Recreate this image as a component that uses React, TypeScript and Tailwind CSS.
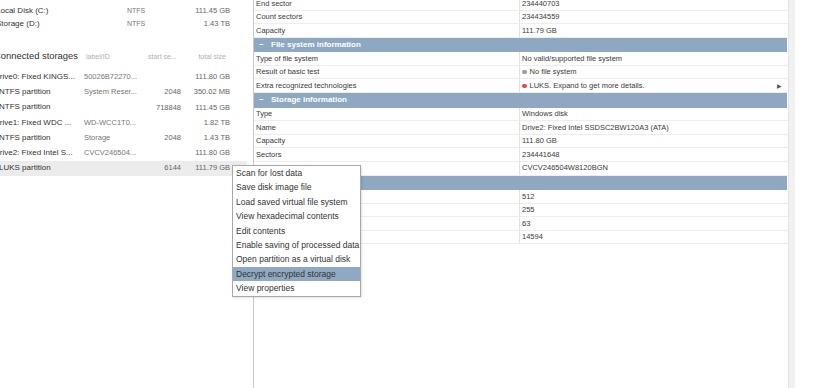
import React from "react";

const font = { fontFamily: '"Liberation Sans", Arial, sans-serif' };

type Row = { k: string; v: React.ReactNode };

function TRow({ k, v }: Row) {
  return (
    <div className="flex h-[13.6px] border-b border-[#ededed] text-[7.5px] text-[#3a3a3a] leading-none">
      <div className="w-[266px] flex items-center pl-[2px] border-r border-[#e2e2e2] shrink-0">{k}</div>
      <div className="flex-1 flex items-center pl-[2px] pr-[6px]">{v}</div>
    </div>
  );
}

function THead({ t, label = true }: { t: string; label?: boolean }) {
  return (
    <div className="flex items-center h-[14.5px] bg-[#8ea8c1] text-white font-bold text-[8px] leading-none mr-[1px]">
      <span className="pl-[5px] w-[17px]">−</span>
      {label ? <span>{t}</span> : null}
    </div>
  );
}

function Dot({ c }: { c: string }) {
  return <span className={`inline-block w-[4.5px] h-[4.5px] rounded-full mr-[3px] ${c}`} />;
}

const grid = "grid grid-cols-[90px_62px_35px_49px] items-center whitespace-nowrap leading-none";

function LRow({
  name,
  part,
  label,
  start,
  size,
  hl,
}: {
  name: string;
  part?: boolean;
  label?: string;
  start?: string;
  size: string;
  hl?: boolean;
}) {
  return (
    <div className={`h-[15.2px] flex items-center ${hl ? "bg-[#ececec]" : ""}`}>
      <div className={`${grid} -ml-[6px]`}>
        <span className={`text-[8px] text-[#333] overflow-visible ${part ? "pl-[5px]" : ""}`}>{name}</span>
        <span className="text-[7.5px] text-[#777]">{label}</span>
        <span className="text-[7.5px] text-[#666] text-right">{start}</span>
        <span className="text-[7.5px] text-[#666] text-right">{size}</span>
      </div>
    </div>
  );
}

function VolRow({ name, fs, size }: { name: string; fs: string; size: string }) {
  return (
    <div className="h-[13px] -ml-[4px] grid grid-cols-[131px_40px_63px] items-center whitespace-nowrap leading-none">
      <span className="text-[8px] text-[#333]">{name}</span>
      <span className="text-[7px] text-[#777]">{fs}</span>
      <span className="text-[7.5px] text-[#666] text-right">{size}</span>
    </div>
  );
}

const menuItems = [
  "Scan for lost data",
  "Save disk image file",
  "Load saved virtual file system",
  "View hexadecimal contents",
  "Edit contents",
  "Enable saving of processed data",
  "Open partition as a virtual disk",
  "Decrypt encrypted storage",
  "View properties",
];

export default function App() {
  return (
    <div className="relative w-[818px] h-[388px] overflow-hidden bg-white flex" style={font}>
      {/* Left panel */}
      <div className="w-[253px] shrink-0 flex flex-col overflow-hidden">
        <div className="pt-[4px] flex flex-col">
          <VolRow name="Local Disk (C:)" fs="NTFS" size="111.45 GB" />
          <VolRow name="Storage (D:)" fs="NTFS" size="1.43 TB" />
        </div>
        <div className="mt-[17px] h-[18px] flex items-center">
          <div className={`${grid} -ml-[6px]`}>
            <span className="text-[9.4px] text-[#2f2f2f]">Connected storages</span>
            <span className="text-[7px] text-[#b0b0b0] pl-[2px]">label/ID</span>
            <span className="text-[7px] text-[#b0b0b0] pl-[2px]">start se...</span>
            <span className="text-[7px] text-[#b0b0b0] text-right pr-[4px]">total size</span>
          </div>
        </div>
        <div className="mt-[4.4px] pr-[6px] flex flex-col">
          <LRow name="Drive0: Fixed KINGS..." label="50026B72270..." size="111.80 GB" />
          <LRow name="NTFS partition" part label="System Reser..." start="2048" size="350.02 MB" />
          <LRow name="NTFS partition" part start="718848" size="111.45 GB" />
          <LRow name="Drive1: Fixed WDC ..." label="WD-WCC1T0..." size="1.82 TB" />
          <LRow name="NTFS partition" part label="Storage" start="2048" size="1.43 TB" />
          <LRow name="Drive2: Fixed Intel S..." label="CVCV246504..." size="111.80 GB" />
          <LRow name="LUKS partition" part start="6144" size="111.79 GB" hl />
        </div>
      </div>

      {/* Right panel */}
      <div className="w-[542px] shrink-0 border-l border-[#c9c9c9] flex">
        <div className="flex-1 -mt-[3px]">
          <TRow k="End sector" v="234440703" />
          <TRow k="Count sectors" v="234434559" />
          <TRow k="Capacity" v="111.79 GB" />
          <THead t="File system information" />
          <TRow k="Type of file system" v="No valid/supported file system" />
          <TRow
            k="Result of basic test"
            v={
              <span className="flex items-center">
                <Dot c="bg-[#9a9a9a]" />
                No file system
              </span>
            }
          />
          <TRow
            k="Extra recognized technologies"
            v={
              <span className="flex items-center w-full">
                <Dot c="bg-[#e0484c]" />
                <span className="flex-1">LUKS. Expand to get more details.</span>
                <span className="text-[6px] text-[#555]">▶</span>
              </span>
            }
          />
          <THead t="Storage information" />
          <TRow k="Type" v="Windows disk" />
          <TRow k="Name" v="Drive2: Fixed Intel SSDSC2BW120A3 (ATA)" />
          <TRow k="Capacity" v="111.80 GB" />
          <TRow k="Sectors" v="234441648" />
          <TRow k="Serial number" v="CVCV246504W8120BGN" />
          <THead t="Geometry" />
          <TRow k="Bytes per sector" v="512" />
          <TRow k="Heads" v="255" />
          <TRow k="Sectors per track" v="63" />
          <TRow k="Cylinders" v="14594" />
        </div>
        <div className="w-[7px] shrink-0 bg-[#f1f1f1] border-l border-[#e4e4e4]" />
      </div>
      <div className="flex-1" />

      {/* Context menu */}
      <div className="absolute left-[232px] top-[165px] w-[129px] flex flex-col bg-white border border-[#a8a8a8] shadow-[1px_1px_2px_rgba(0,0,0,0.12)]">
        {menuItems.map((m) => (
          <div
            key={m}
            className={`h-[14.4px] flex items-center pl-[3px] text-[8.5px] leading-none text-[#333] whitespace-nowrap ${
              m === "Decrypt encrypted storage" ? "bg-[#8fa9c2]" : ""
            }`}
          >
            {m}
          </div>
        ))}
      </div>
    </div>
  );
}
